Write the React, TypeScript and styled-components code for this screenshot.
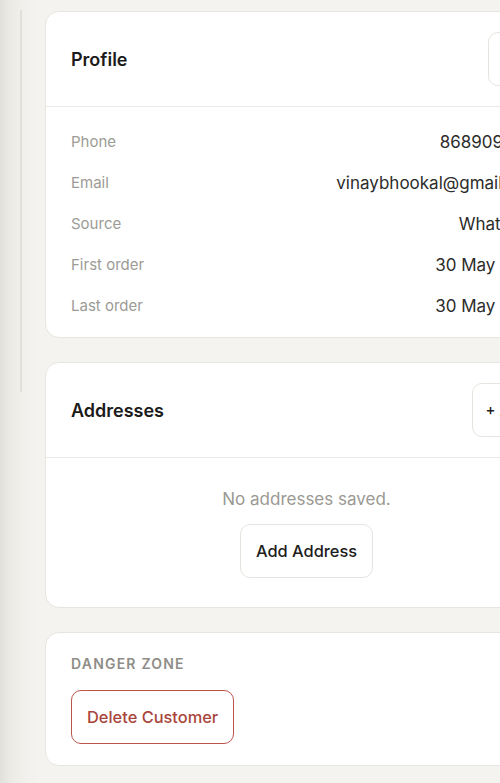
import React from "react";
import styled, { createGlobalStyle } from "styled-components";

const profileRows = [
  { label: "Phone", value: "8689094412" },
  { label: "Email", value: "vinaybhookal@gmail.com" },
  { label: "Source", value: "WhatsApp" },
  { label: "First order", value: "30 May 2025" },
  { label: "Last order", value: "30 May 2025" },
];

const App: React.FC = () => {
  return (
    <>
      <GlobalStyle />
      <Shell>
        <Gutter>
          <Track />
        </Gutter>
        <Column>
          <Card>
            <CardHeader>
              <CardTitle>Profile</CardTitle>
              <GhostButton>Edit</GhostButton>
            </CardHeader>
            <ProfileBody>
              {profileRows.map((row) => (
                <InfoRow key={row.label}>
                  <InfoLabel>{row.label}</InfoLabel>
                  <InfoValue>{row.value}</InfoValue>
                </InfoRow>
              ))}
            </ProfileBody>
          </Card>

          <Card>
            <CardHeader>
              <CardTitle>Addresses</CardTitle>
              <GhostButton>+ Add</GhostButton>
            </CardHeader>
            <EmptyBody>
              <EmptyText>No addresses saved.</EmptyText>
              <OutlineButton>Add Address</OutlineButton>
            </EmptyBody>
          </Card>

          <Card>
            <DangerBody>
              <SectionLabel>Danger Zone</SectionLabel>
              <OutlineButton $danger>Delete Customer</OutlineButton>
            </DangerBody>
          </Card>
        </Column>
      </Shell>
    </>
  );
};

export default App;

// Styles
const GlobalStyle = createGlobalStyle`
  html, body { margin: 0; padding: 0; overflow: hidden; background: #f4f3ef; }
  body { font-family: Inter, "Liberation Sans", sans-serif; -webkit-font-smoothing: antialiased; }
`;
const Shell = styled.div`display: flex; width: 620px; min-height: 783px; background: #f4f3ef;`;
const Gutter = styled.div`
  width: 45px; flex-shrink: 0; display: flex;
  background: linear-gradient(to right, #e1e0db 0, #ebeae5 10px, #f2f1ed 26px, #f4f3ef 40px);
`;
const Track = styled.div`width: 2px; height: 382px; margin: 10px 0 0 20px; background: #e1dfd9;`;
const Column = styled.div`width: 523px; flex-shrink: 0; display: flex; flex-direction: column; gap: 24px; padding-top: 11px;`;
const Card = styled.section`background: #fff; border: 1px solid #e7e5df; border-radius: 14px; overflow: hidden;`;
const CardHeader = styled.div`
  display: flex; align-items: center; justify-content: space-between;
  height: 95px; box-sizing: border-box; padding: 0 25px; border-bottom: 1.5px solid #ebe9e4;
`;
const CardTitle = styled.h2`margin: 0; font-size: 18px; font-weight: 600; color: #1b1b1a;`;
const GhostButton = styled.button`
  height: 54px; padding: 0 12.5px; border: 1.5px solid #e6e4de; border-radius: 10px; background: #fff;
  font-family: inherit; font-size: 15px; font-weight: 500; color: #1d1d1c;
`;
const ProfileBody = styled.div`display: flex; flex-direction: column; padding: 14px 25px 11px;`;
const InfoRow = styled.div`display: flex; align-items: center; justify-content: space-between; height: 41px;`;
const InfoLabel = styled.span`font-size: 15px; color: #9c9b95;`;
const InfoValue = styled.span`font-size: 17px; color: #2c2c2a;`;
const EmptyBody = styled.div`display: flex; flex-direction: column; align-items: center; gap: 15px; padding: 31px 25px 29px;`;
const EmptyText = styled.p`margin: 0; font-size: 17px; color: #9a9993;`;
const OutlineButton = styled.button<{ $danger?: boolean }>`
  height: 54px; padding: 0 15px; border-radius: 10px; background: #fff;
  border: 1.5px solid ${(p) => (p.$danger ? "#b9554b" : "#e6e4de")};
  font-family: inherit; font-size: 16.4px; font-weight: 500;
  color: ${(p) => (p.$danger ? "#a9463c" : "#1d1d1c")};
`;
const DangerBody = styled.div`display: flex; flex-direction: column; align-items: flex-start; gap: 18px; padding: 22px 25px 21px;`;
const SectionLabel = styled.div`font-size: 14px; font-weight: 600; letter-spacing: 1.2px; text-transform: uppercase; color: #8f8d87;`;
